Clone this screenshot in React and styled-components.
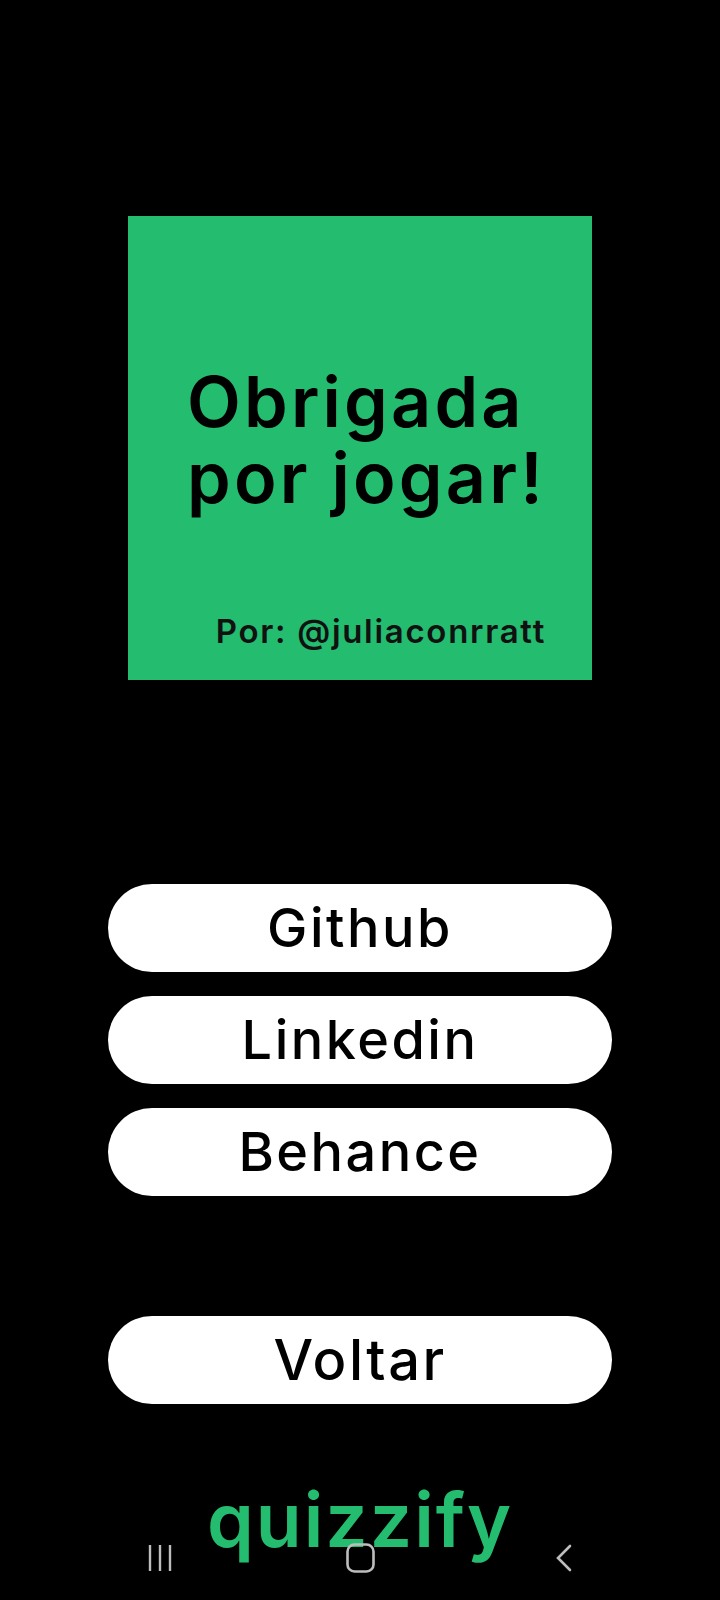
import React from "react";
import styled, { createGlobalStyle } from "styled-components";

const Global = createGlobalStyle`
  html, body { margin: 0; padding: 0; background: #000; }
  body { font-family: Inter, "Noto Sans", sans-serif; }
`;

const Screen = styled.div`
  position: relative;
  width: 720px;
  min-height: 1600px;
  background: #000;
  display: flex;
  flex-direction: column;
  align-items: center;
  box-sizing: border-box;
  overflow: hidden;
`;

const Card = styled.section`
  margin-top: 216px;
  width: 464px;
  height: 464px;
  background: #24bc6f;
  box-sizing: border-box;
  padding: 148px 46px 0 59px;
  display: flex;
  flex-direction: column;
`;

const Title = styled.h1`
  margin: 0;
  font-family: Inter, sans-serif;
  font-weight: 600;
  font-size: 70px;
  line-height: 76px;
  letter-spacing: 3.2px;
  color: #000;
`;

const Byline = styled.p`
  margin: 99px 0 0;
  align-self: flex-end;
  font-family: Inter, sans-serif;
  font-weight: 600;
  font-size: 33px;
  line-height: 33px;
  letter-spacing: 1.7px;
  color: #111;
  white-space: nowrap;
`;

const LinkList = styled.nav`
  margin-top: ${(p) => p.$top}px;
  display: flex;
  flex-direction: column;
  gap: 24px;
`;

const PillButton = styled.button`
  width: 504px;
  height: 88px;
  border: none;
  border-radius: 44px;
  background: #fff;
  color: #000;
  font-family: Inter, sans-serif;
  font-weight: 500;
  font-size: ${(p) => p.$size || 54}px;
  letter-spacing: 2.5px;
  line-height: 1;
  display: flex;
  align-items: center;
  justify-content: center;
  padding: 0;
  cursor: pointer;
`;

const Logo = styled.div`
  margin-top: 78px;
  font-family: Inter, sans-serif;
  font-weight: 600;
  font-size: 75px;
  line-height: 75px;
  letter-spacing: 2px;
  color: #24bc6f;
`;

const NavBar = styled.div`
  position: absolute;
  left: 0;
  right: 0;
  top: 1542px;
  height: 32px;
  display: flex;
  align-items: center;
  padding-left: 147px;
`;

const NavSlot = styled.div`
  margin-left: ${(p) => p.$gap || 0}px;
  display: flex;
  align-items: center;
`;

const RecentsIcon = () => (
  <svg width="26" height="28" viewBox="0 0 26 28" fill="none" stroke="#bdbdbd" strokeWidth="2.4">
    <line x1="3" y1="1" x2="3" y2="27" />
    <line x1="13" y1="1" x2="13" y2="27" />
    <line x1="23" y1="1" x2="23" y2="27" />
  </svg>
);

const HomeIcon = () => (
  <svg width="29" height="30" viewBox="0 0 29 30" fill="none" stroke="#bdbdbd" strokeWidth="2.6">
    <rect x="1.5" y="1.5" width="26" height="27" rx="7" />
  </svg>
);

const BackIcon = () => (
  <svg width="17" height="28" viewBox="0 0 17 28" fill="none" stroke="#bdbdbd" strokeWidth="2.6" strokeLinecap="round">
    <polyline points="15,2 3,14 15,26" />
  </svg>
);

export default function App() {
  return (
    <>
      <Global />
      <Screen>
        <Card>
          <Title>
            Obrigada
            <br />
            por jogar!
          </Title>
          <Byline>Por: @juliaconrratt</Byline>
        </Card>
        <LinkList $top={204}>
          <PillButton>Github</PillButton>
          <PillButton>Linkedin</PillButton>
          <PillButton>Behance</PillButton>
        </LinkList>
        <LinkList $top={120}>
          <PillButton $size={56}>Voltar</PillButton>
        </LinkList>
        <Logo>quizzify</Logo>
        <NavBar>
          <NavSlot>
            <RecentsIcon />
          </NavSlot>
          <NavSlot $gap={173}>
            <HomeIcon />
          </NavSlot>
          <NavSlot $gap={180}>
            <BackIcon />
          </NavSlot>
        </NavBar>
      </Screen>
    </>
  );
}
